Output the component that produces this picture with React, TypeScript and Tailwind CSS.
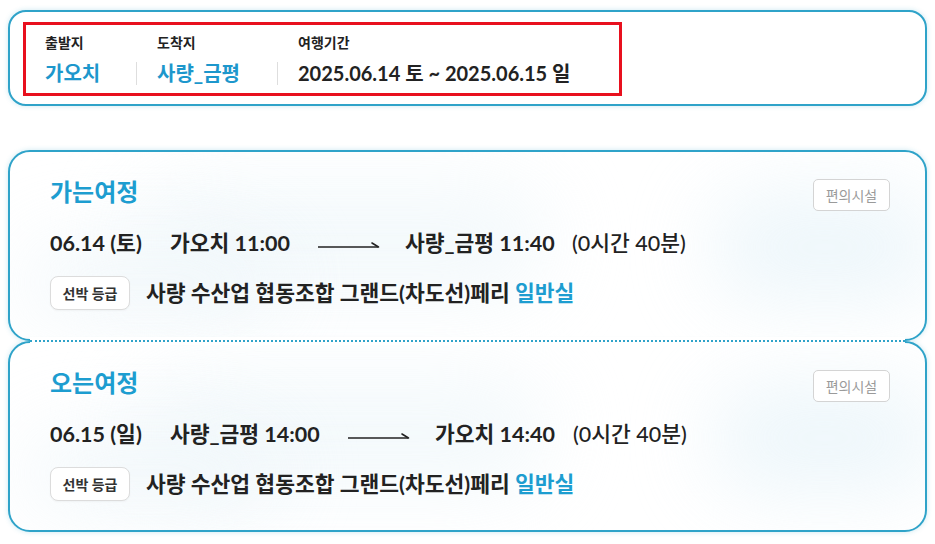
import React from "react";

const BORDER = "border-[#2fa3c9]";

function Arrow() {
  return (
    <svg width="62" height="10" viewBox="0 0 62 10" className="shrink-0 mt-[6px]">
      <line x1="0" y1="6" x2="60" y2="6" stroke="#222" strokeWidth="1.6" />
      <line x1="54" y1="2" x2="60.5" y2="6" stroke="#222" strokeWidth="1.6" strokeLinecap="round" />
    </svg>
  );
}

function Blobs() {
  return (
    <div className="pointer-events-none absolute inset-0 overflow-hidden rounded-[20px]">
      <div className="absolute left-[700px] top-[40px] w-[230px] h-[110px] rounded-full bg-[#e6f3f9] opacity-70 blur-2xl" />
      <div className="absolute left-[120px] top-[30px] w-[420px] h-[120px] rounded-full bg-[#f1f8fb] opacity-80 blur-2xl" />
      <div className="absolute left-[10px] top-[90px] w-[260px] h-[80px] rounded-full bg-[#eef6fa] opacity-70 blur-2xl" />
    </div>
  );
}

type Trip = {
  title: string;
  date: string;
  from: string;
  fromW: string;
  to: string;
  toW: string;
};

function TripCard({ trip, second }: { trip: Trip; second?: boolean }) {
  return (
    <div
      className={`relative border-2 ${BORDER} rounded-[22px] bg-white h-[191px] pt-[25px] pl-[40px] pr-[35px] shadow-[0_0_5px_rgba(47,163,201,0.25)]`}
    >
      <Blobs />
      {second && (
        <div className="absolute left-[20px] right-[20px] top-[-6px] h-[8px] bg-white flex items-center z-10">
          <div className={`w-full border-t-2 border-dotted ${BORDER}`} />
        </div>
      )}
      <div className="relative">
        <div className="flex justify-between items-start">
          <div className="text-[24px] leading-[30px] font-bold text-[#1d9dd0]">{trip.title}</div>
          <button className="h-[32px] w-[77px] rounded-[5px] border border-[#d4d4d4] bg-white text-[14px] text-[#9a9a9a] mt-[2px]">
            편의시설
          </button>
        </div>
        <div className="mt-[18px] flex items-center text-[21.5px] leading-[28px] font-bold text-[#222]">
          <span className="w-[120px] shrink-0">{trip.date}</span>
          <span className={`${trip.fromW} shrink-0`}>{trip.from}</span>
          <span className="flex items-center shrink-0 mr-[25px]">
            <Arrow />
          </span>
          <span className={`${trip.toW} shrink-0`}>{trip.to}</span>
          <span className="font-medium">(0시간 40분)</span>
        </div>
        <div className="mt-[19px] flex items-center">
          <div className="h-[34px] w-[80px] rounded-[8px] border border-[#dcdcdc] bg-white flex items-center justify-center text-[14px] font-bold text-[#333] shadow-[0_1px_2px_rgba(0,0,0,0.04)]">
            선박 등급
          </div>
          <div className="ml-[16px] text-[21.5px] leading-[28px] font-bold text-[#222]">
            사량 수산업 협동조합 그랜드(차도선)페리 <span className="text-[#1d9dd0]">일반실</span>
          </div>
        </div>
      </div>
    </div>
  );
}

export default function App() {
  const trips: Trip[] = [
    { title: "가는여정", date: "06.14 (토)", from: "가오치 11:00", fromW: "w-[148px]", to: "사량_금평 11:40", toW: "w-[167px]" },
    { title: "오는여정", date: "06.15 (일)", from: "사량_금평 14:00", fromW: "w-[178px]", to: "가오치 14:40", toW: "w-[138px]" },
  ];
  return (
    <div className="w-[935px] h-[544px] bg-white px-[8px] pt-[10px] font-[Lato,'Noto_Sans_CJK_KR',sans-serif] overflow-hidden">
      <div
        className={`relative border-2 ${BORDER} rounded-[18px] bg-white h-[96px] pl-[13px] pt-[10px] shadow-[0_0_5px_rgba(47,163,201,0.25)]`}
      >
        <div className="w-[599px] h-[74px] border-[3px] border-[#e8101e] pl-[19px] pt-[8px]">
          <div className="flex text-[14px] leading-[20px] font-bold text-[#222]">
            <span className="w-[112px]">출발지</span>
            <span className="w-[141px]">도착지</span>
            <span>여행기간</span>
          </div>
          <div className="mt-[6px] flex items-center text-[20px] leading-[28px] font-bold">
            <span className="w-[91px] text-[#1d97cc]">가오치</span>
            <span className="w-px h-[23px] bg-[#dedede] mr-[20px]" />
            <span className="w-[120px] text-[#1d97cc]">사량_금평</span>
            <span className="w-px h-[23px] bg-[#dedede] mr-[20px]" />
            <span className="text-[#222]">2025.06.14 토 ~ 2025.06.15 일</span>
          </div>
        </div>
      </div>
      <div className="mt-[44px]">
        <TripCard trip={trips[0]} />
        <TripCard trip={trips[1]} second />
      </div>
    </div>
  );
}
